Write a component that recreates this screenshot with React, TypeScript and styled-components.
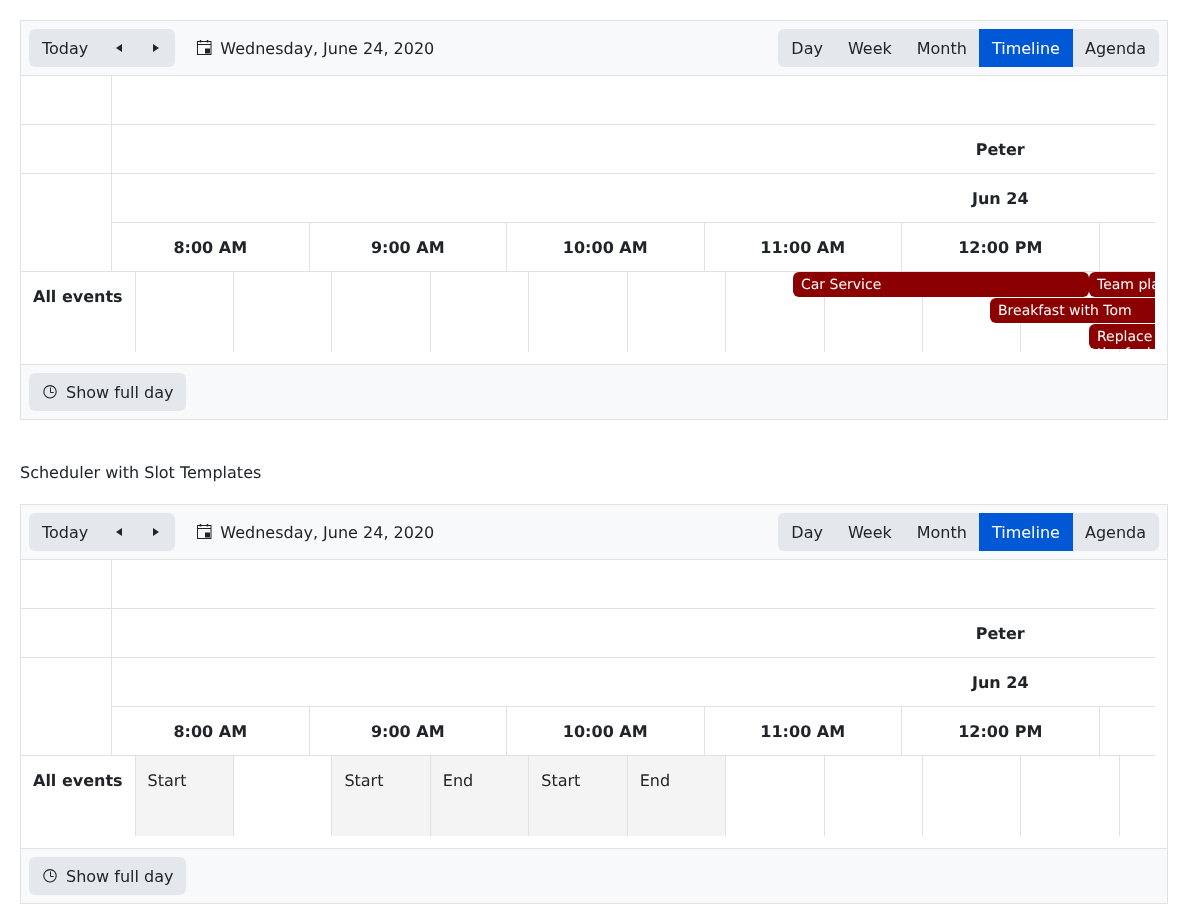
import React from 'react';
import styled, { createGlobalStyle } from 'styled-components';

const GlobalStyle = createGlobalStyle`
  html, body { margin: 0; padding: 0; background: #fff; }
  body {
    font-family: "DejaVu Sans", sans-serif; font-size: 16px; line-height: 24px;
    color: #212529; text-rendering: geometricPrecision;
  }
`;

const Page = styled.div`
  padding: 20px 20px 20px 20px;
  display: flex; flex-direction: column;
  will-change: transform;
`;
const Caption = styled.div`
  box-sizing: border-box; margin: 40px 0 20px 0; height: 24px; padding-top: 1px;
`;
const Frame = styled.div`
  box-sizing: border-box; height: 400px; border: 1px solid #dee2e6;
  display: flex; flex-direction: column;
`;
const Toolbar = styled.div`
  box-sizing: border-box; height: 55px; padding: 8px;
  background: #f8f9fa; border-bottom: 1px solid #dee2e6;
  display: flex; align-items: center;
`;
const Footer = styled.div`
  box-sizing: border-box; height: 55px; padding: 8px;
  background: #f8f9fa; border-top: 1px solid #dee2e6;
  display: flex; align-items: center;
`;
const Group = styled.div`
  display: flex; height: 38px; background: #e4e7eb; border-radius: 6px; overflow: hidden;
`;
const Button = styled.button<{ $active?: boolean }>`
  box-sizing: border-box; height: 38px; padding: 0 13px; margin: 0; border: none;
  background: ${p => (p.$active ? '#0058d6' : 'transparent')};
  color: ${p => (p.$active ? '#fff' : '#212529')};
  font: inherit; line-height: 24px; cursor: pointer; position: relative;
  display: flex; align-items: center; justify-content: center;
  & + & { margin-left: -1px; }
`;
const ButtonLabel = styled.span`
  display: block; padding-top: 2px;
`;
const ArrowButton = styled(Button)`
  width: 38px; padding: 0;
`;
const FullDayButton = styled(Button)`
  padding-left: 14px; gap: 9px;
`;
const DateNav = styled.div`
  margin-left: 22px; display: flex; align-items: center; gap: 8px;
`;
const DateText = styled.span`
  display: block; padding-top: 2px;
`;
const Spacer = styled.div`
  flex: 1;
`;
const Body = styled.div`
  height: 288px; padding-right: 12px; background: #fff;
`;
const Timeline = styled.div`
  height: 288px; overflow: hidden;
`;
const HeaderGrid = styled.div`
  display: grid; grid-template-columns: 91px 1fr; grid-auto-rows: 49px;
`;
const CornerCell = styled.div<{ $span?: number }>`
  box-sizing: border-box; border-right: 1px solid #dee2e6; border-bottom: 1px solid #dee2e6;
  grid-row: span ${p => p.$span ?? 1};
`;
const HeaderRow = styled.div`
  box-sizing: border-box; border-bottom: 1px solid #dee2e6; display: flex; min-width: 0;
`;
const GroupTitle = styled.div`
  flex: 0 0 1776.5px; font-weight: 700; text-align: center; line-height: 24px; padding-top: 13px;
`;
const TimeCell = styled.div`
  box-sizing: border-box; flex: 0 0 197.5px; border-right: 1px solid #dee2e6; padding-top: 13px;
  font-weight: 700; text-align: center; line-height: 24px; white-space: nowrap;
`;
const AllDayRow = styled.div`
  position: relative; display: flex; height: 80px;
`;
const AllDayLabel = styled.div`
  flex: 0 0 113.5px; box-sizing: border-box; padding: 13px 0 0 12px;
  font-weight: 700; white-space: nowrap;
`;
const Slot = styled.div<{ $shaded?: boolean }>`
  box-sizing: border-box; flex: 0 0 98.4375px; height: 80px; padding: 13px 0 0 12px;
  border-left: 1px solid #dee2e6;
  background: ${p => (p.$shaded ? '#f4f4f4' : '#fff')};
`;
const EventBar = styled.div`
  position: absolute; box-sizing: border-box; height: 25px; padding: 5px 8px 3px 8px;
  background: #8b0000; color: #fff; border-radius: 6px; overflow: hidden;
  font-size: 14px; line-height: 17px;
`;

const CalendarIcon = () => (
  <svg width="15" height="16" viewBox="0 0 15 16" fill="none" aria-hidden="true">
    <rect x="0.5" y="1.5" width="13.5" height="13" stroke="#212529" />
    <path d="M0.5 4.5H14" stroke="#212529" />
    <path d="M3.5 0V2.5M10.5 0V2.5" stroke="#212529" strokeWidth="1.5" />
    <rect x="8" y="8.5" width="5" height="5" fill="#212529" />
  </svg>
);

const ClockIcon = () => (
  <svg width="14" height="14" viewBox="0 0 14 14" fill="none" aria-hidden="true">
    <circle cx="7" cy="6.8" r="6.2" stroke="#212529" strokeWidth="1.1" />
    <path d="M7.5 2.5V7.5H10.7" stroke="#212529" />
  </svg>
);

const Caret = ({ dir }: { dir: 'left' | 'right' }) => (
  <svg width="6" height="8" viewBox="0 0 6 8" aria-hidden="true">
    <path d={dir === 'left' ? 'M6 0V8L0 4Z' : 'M0 0V8L6 4Z'} fill="#212529" />
  </svg>
);

const views = ['Day', 'Week', 'Month', 'Timeline', 'Agenda'];
const times = ['8:00 AM', '9:00 AM', '10:00 AM', '11:00 AM', '12:00 PM', '1:00 PM'];

interface SlotData {
  text?: string;
  shaded?: boolean;
}

interface SchedulerEvent {
  title: string;
  left: number;
  top: number;
  width: number;
}

const plainSlots: SlotData[] = Array.from({ length: 18 }, () => ({}));

const templateSlots: SlotData[] = [
  { text: 'Start', shaded: true },
  {},
  { text: 'Start', shaded: true },
  { text: 'End', shaded: true },
  { text: 'Start', shaded: true },
  { text: 'End', shaded: true },
  ...Array.from({ length: 12 }, () => ({})),
];

const events: SchedulerEvent[] = [
  { title: 'Car Service', left: 772, top: 0, width: 296 },
  { title: 'Team planning', left: 1068, top: 0, width: 197 },
  { title: 'Breakfast with Tom', left: 969, top: 26, width: 296 },
  { title: 'Replace the fuel filter', left: 1068, top: 52, width: 98 },
];

const Scheduler: React.FC<{ slots: SlotData[]; items?: SchedulerEvent[] }> = ({ slots, items = [] }) => (
  <Frame>
    <Toolbar>
      <Group>
        <Button><ButtonLabel>Today</ButtonLabel></Button>
        <ArrowButton><Caret dir="left" /></ArrowButton>
        <ArrowButton><Caret dir="right" /></ArrowButton>
      </Group>
      <DateNav>
        <CalendarIcon />
        <DateText>Wednesday, June 24, 2020</DateText>
      </DateNav>
      <Spacer />
      <Group>
        {views.map(v => (
          <Button key={v} $active={v === 'Timeline'}><ButtonLabel>{v}</ButtonLabel></Button>
        ))}
      </Group>
    </Toolbar>
    <Body>
      <Timeline>
        <HeaderGrid>
          <CornerCell />
          <HeaderRow />
          <CornerCell />
          <HeaderRow><GroupTitle>Peter</GroupTitle></HeaderRow>
          <CornerCell $span={2} />
          <HeaderRow><GroupTitle>Jun 24</GroupTitle></HeaderRow>
          <HeaderRow>
            {times.map(t => <TimeCell key={t}>{t}</TimeCell>)}
          </HeaderRow>
        </HeaderGrid>
        <AllDayRow>
          <AllDayLabel>All events</AllDayLabel>
          {slots.map((s, i) => (
            <Slot key={i} $shaded={s.shaded}>{s.text}</Slot>
          ))}
          {items.map(ev => (
            <EventBar key={ev.title} style={{ left: ev.left, top: ev.top, width: ev.width }}>
              {ev.title}
            </EventBar>
          ))}
        </AllDayRow>
      </Timeline>
    </Body>
    <Footer>
      <Group>
        <FullDayButton><ClockIcon /><ButtonLabel>Show full day</ButtonLabel></FullDayButton>
      </Group>
    </Footer>
  </Frame>
);

const App: React.FC = () => (
  <Page>
    <GlobalStyle />
    <Scheduler slots={plainSlots} items={events} />
    <Caption>Scheduler with Slot Templates</Caption>
    <Scheduler slots={templateSlots} />
  </Page>
);

export default App;
